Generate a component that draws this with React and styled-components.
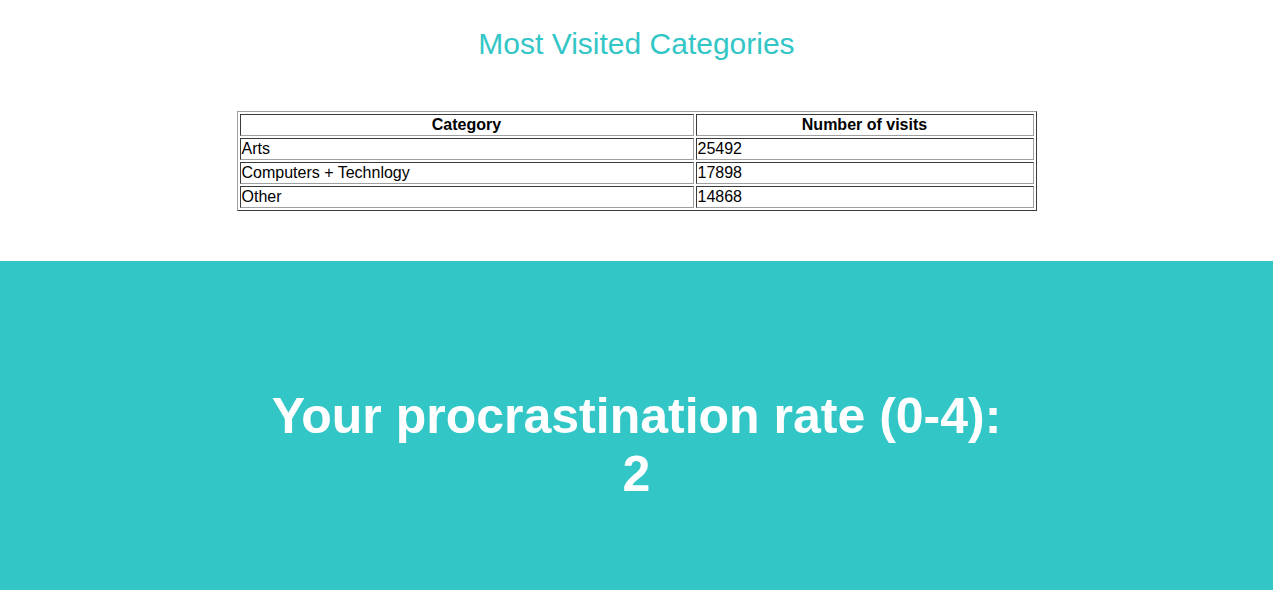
import React from "react";
import styled, { createGlobalStyle } from "styled-components";

const Global = createGlobalStyle`
  html, body { margin: 0; padding: 0; background: #ffffff; }
  body { font-family: "Liberation Sans", Arial, sans-serif; }
`;

const TEAL = "#33c6c6";

const Page = styled.div`
  display: flex;
  flex-direction: column;
  min-height: 590px;
`;

const TopSection = styled.section`
  display: flex;
  flex-direction: column;
  align-items: center;
  padding: 26px 0 50px;
  background: #ffffff;
`;

const Title = styled.h2`
  margin: 0 0 50px;
  font-family: "Liberation Sans", Arial, sans-serif;
  font-weight: normal;
  font-size: 30px;
  line-height: 35px;
  color: ${TEAL};
`;

const Table = styled.table`
  width: 800px;
  border-collapse: separate;
  border-spacing: 2px;
  border-style: solid;
  border-width: 1px;
  border-color: #a0a0a0 #3a3a3a #3a3a3a #a0a0a0;
  font-family: "Liberation Sans", Arial, sans-serif;
  font-size: 16px;
  color: #000;
`;

const Cell = styled.td`
  border-style: solid;
  border-width: 1px;
  border-color: #3a3a3a #a0a0a0 #a0a0a0 #3a3a3a;
  padding: 1px;
  height: 18px;
  line-height: 18px;
  text-align: ${(p) => (p.$head ? "center" : "left")};
  font-weight: ${(p) => (p.$head ? "bold" : "normal")};
  width: ${(p) => p.$w || "auto"};
`;

const RateSection = styled.section`
  flex: 1;
  background: ${TEAL};
  display: flex;
  justify-content: center;
  padding: 126px 0 90px;
`;

const RateText = styled.h1`
  margin: 0;
  max-width: 760px;
  text-align: center;
  color: #ffffff;
  font-family: "Liberation Sans", Arial, sans-serif;
  font-weight: bold;
  font-size: 50px;
  line-height: 58px;
`;

const rows = [
  ["Arts", "25492"],
  ["Computers + Technlogy", "17898"],
  ["Other", "14868"],
];

export default function App() {
  return (
    <Page>
      <Global />
      <TopSection>
        <Title>Most Visited Categories</Title>
        <Table>
          <tbody>
            <tr>
              <Cell as="th" $head $w="450px">Category</Cell>
              <Cell as="th" $head>Number of visits</Cell>
            </tr>
            {rows.map(([c, n]) => (
              <tr key={c}>
                <Cell>{c}</Cell>
                <Cell>{n}</Cell>
              </tr>
            ))}
          </tbody>
        </Table>
      </TopSection>
      <RateSection>
        <RateText>
          Your procrastination rate (0-4):
          <br />2
        </RateText>
      </RateSection>
    </Page>
  );
}
